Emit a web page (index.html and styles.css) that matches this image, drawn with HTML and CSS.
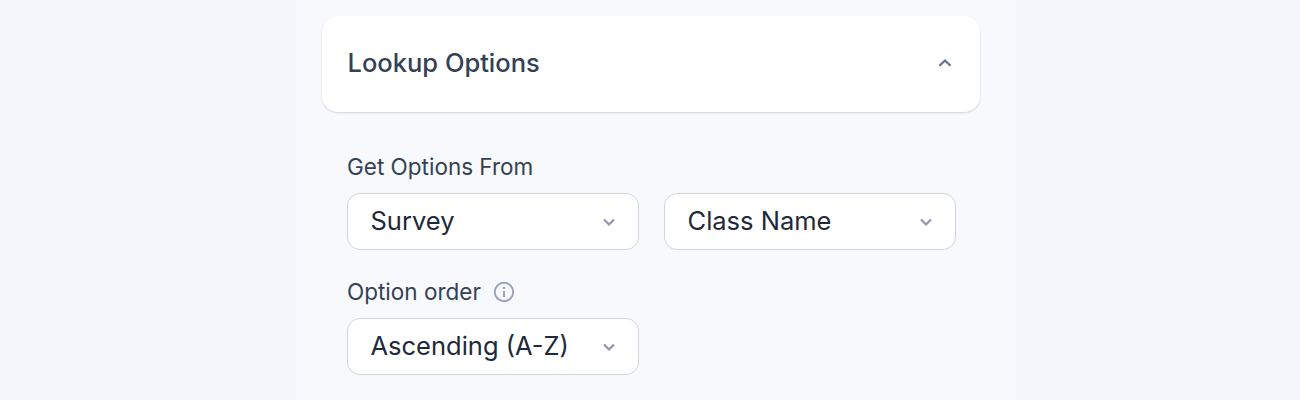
FILE: index.html
```html
<!DOCTYPE html>
<html lang="en">
<head>
<meta charset="utf-8">
<title>Lookup Options</title>
<link rel="stylesheet" href="styles.css">
</head>
<body>
<main class="panel">
  <section class="card">
    <h2 class="card-title">Lookup Options</h2>
    <svg class="chevron-up" width="20" height="20" viewBox="0 0 20 20" fill="none"><path d="M4.500 12.800 10 7.500l5.500 5.300" stroke="currentColor" stroke-width="2.200"/></svg>
  </section>
  <div class="fields">
    <div class="field">
      <label class="label">Get Options From</label>
      <div class="row">
        <div class="select"><span>Survey</span><svg class="chevron" width="20" height="20" viewBox="0 0 20 20" fill="none"><path d="M5 7.500 10 12.500l5-5" stroke="currentColor" stroke-width="2.200"/></svg></div>
        <div class="select"><span>Class Name</span><svg class="chevron" width="20" height="20" viewBox="0 0 20 20" fill="none"><path d="M5 7.500 10 12.500l5-5" stroke="currentColor" stroke-width="2.200"/></svg></div>
      </div>
    </div>
    <div class="field">
      <label class="label">Option order
        <svg class="info" width="22" height="22" viewBox="0 0 22 22" fill="none"><circle cx="11" cy="11" r="9.200" stroke="currentColor" stroke-width="1.900"/><path d="M11 10v6" stroke="currentColor" stroke-width="2"/><circle cx="11" cy="7" r="1.200" fill="currentColor"/></svg>
      </label>
      <div class="row">
        <div class="select"><span>Ascending (A-Z)</span><svg class="chevron" width="20" height="20" viewBox="0 0 20 20" fill="none"><path d="M5 7.500 10 12.500l5-5" stroke="currentColor" stroke-width="2.200"/></svg></div>
      </div>
    </div>
  </div>
</main>
</body>
</html>
```
FILE: styles.css
```css
* { box-sizing: border-box; }
html, body { margin: 0; height: 400px; overflow: hidden; }
body { background: #f5f7fc; font-family: Inter, "Liberation Sans", sans-serif; }
.panel {
  width: 720px;
  height: 400px;
  margin-left: 296px;
  padding: 16px 36px 0 26px;
  background: #f8f9fc;
}
.card {
  display: flex;
  align-items: center;
  justify-content: space-between;
  height: 96px;
  padding: 0 25px 0 25.500px;
  background: #fff;
  border-radius: 16px;
  box-shadow: 0 1px 2px rgba(30, 41, 80, 0.18);
}
.card-title {
  margin: -4px 0 0;
  font-size: 25.500px;
  font-weight: 550;
  color: #334155;
}
.chevron-up { color: #64708c; margin: -2px 0 0; }
.fields {
  display: flex;
  flex-direction: column;
  gap: 27px;
  padding: 40px 0 0 25px;
}
.label {
  display: flex;
  align-items: center;
  gap: 12px;
  height: 30px;
  margin-bottom: 11px;
  padding-bottom: 1px;
  font-size: 22.500px;
  color: #334155;
}
.info { color: #98a2b8; margin-top: 1px; }
.row { display: flex; gap: 25px; }
.select {
  display: flex;
  align-items: center;
  justify-content: space-between;
  width: 292px;
  height: 57px;
  padding: 0 19px 0 22.500px;
  background: #fff;
  border: 1px solid #d0d5dd;
  border-radius: 13px;
  font-size: 25.500px;
  color: #1e293b;
}
.select span { margin-top: -3px; }
.chevron { color: #8d97ad; }
```
